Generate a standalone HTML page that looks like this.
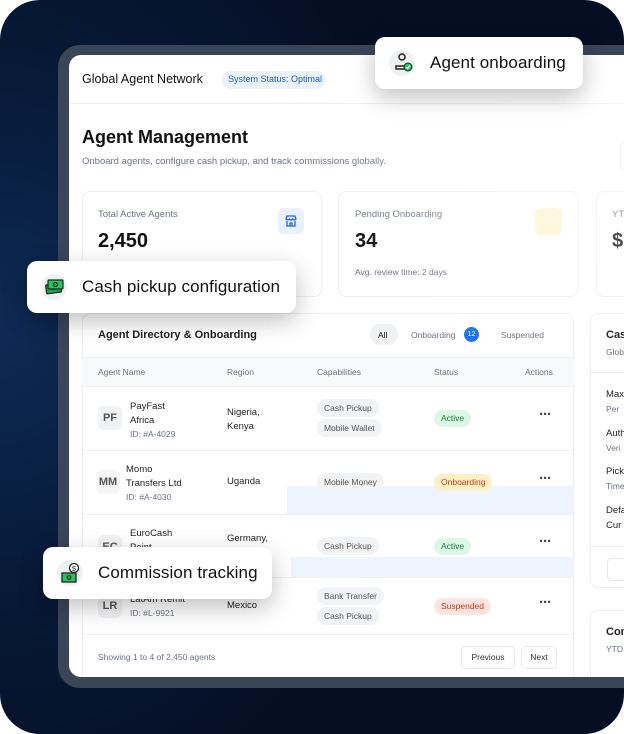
<!DOCTYPE html>
<html><head><meta charset="utf-8"><style>
*{margin:0;padding:0;box-sizing:border-box}
body{width:624px;height:734px;background:#fff;font-family:"Liberation Sans",sans-serif;position:relative;overflow:hidden}
.bg{position:absolute;left:0;top:0;width:624px;height:734px;border-radius:40px;background:radial-gradient(ellipse 420px 500px at 0px 330px,#0e2a55 0%,#071a38 50%,#050f24 100%)}
.frame{position:absolute;left:58px;top:45px;width:600px;height:643px;border-radius:22px;background:#3a4658}
.screen{position:absolute;left:69px;top:55px;width:600px;height:622px;border-radius:12px;background:#fff;overflow:hidden}
.abs{position:absolute}
.t{position:absolute;white-space:nowrap}
.card{position:absolute;border:1px solid #eceef1;border-radius:8px;background:#fff}
.pop{position:absolute;background:#fff;border-radius:10px;box-shadow:0 8px 24px rgba(0,0,0,.25);}
.pop .ic{position:absolute;left:14px;top:13px;width:26px;height:26px;border-radius:50%;background:#eef0f2}
.pop .lbl{position:absolute;top:0;line-height:52px;font-size:17px;color:#111;font-weight:500;letter-spacing:.1px}
.chip{position:absolute;height:18px;line-height:18px;padding:0 7px;background:#f2f3f5;border-radius:9px;font-size:8.5px;color:#555}
.st{position:absolute;height:17px;line-height:17px;padding:0 7px;border-radius:9px;font-size:8.5px}
.g{color:#6b7280}
.dots{position:absolute;font-size:15px;color:#444;letter-spacing:-1px;font-weight:bold;line-height:10px}
.av{position:absolute;width:24px;height:24px;border-radius:6px;background:#f1f2f4;color:#555;font-size:11px;font-weight:bold;text-align:center;line-height:24px}
</style></head><body>
<div class="bg"></div>
<div class="frame"></div>
<div class="screen">
 <div class="t" style="left:13px;top:17px;font-size:12.5px;font-weight:500;color:#111">Global Agent Network</div>
 <div class="abs" style="left:153px;top:16px;width:103px;height:18px;border-radius:9px;background:#eaf2fd"></div>
 <div class="t" style="left:159px;top:19px;font-size:9px;color:#1d5fc2">System Status: Optimal</div>
 <div class="abs" style="left:0;top:48px;width:600px;height:1px;background:#eee"></div>
 <div class="t" style="left:13px;top:72px;font-size:18px;font-weight:bold;color:#111">Agent Management</div>
 <div class="t" style="left:13px;top:101px;font-size:9.5px;color:#6b7280">Onboard agents, configure cash pickup, and track commissions globally.</div>
 <div class="abs" style="left:551px;top:86px;width:20px;height:30px;border:1px solid #e5e7eb;border-radius:6px"></div>
 <div class="card" style="left:13px;top:136px;width:240px;height:106px"></div>
 <div class="t" style="left:29px;top:154px;font-size:9.5px;color:#6b7280">Total Active Agents</div>
 <div class="t" style="left:29px;top:175px;font-size:20px;font-weight:bold;color:#111">2,450</div>
 <div class="abs" style="left:209px;top:153px;width:26px;height:26px;border-radius:6px;background:#e8f1fd"></div>
 <svg class="abs" style="left:215px;top:159px" width="14" height="14" viewBox="0 0 14 14" fill="none" stroke="#2563eb" stroke-width="1.3"><path d="M2 5L3 2h8l1 3v0a2 2 0 0 1-3.3 0a2 2 0 0 1-3.4 0A2 2 0 0 1 2 5z"/><path d="M3 7v5h8V7M6 12V9h2v3"/></svg>
 <div class="card" style="left:269px;top:136px;width:241px;height:106px"></div>
 <div class="t" style="left:286px;top:154px;font-size:9.5px;color:#6b7280">Pending Onboarding</div>
 <div class="t" style="left:286px;top:175px;font-size:20px;font-weight:bold;color:#111">34</div>
 <div class="t" style="left:286px;top:212px;font-size:8.5px;color:#6b7280">Avg. review time: 2 days</div>
 <div class="abs" style="left:466px;top:153px;width:27px;height:27px;border-radius:6px;background:#fdf3cf"></div>
 <div class="card" style="left:527px;top:136px;width:100px;height:106px"></div>
 <div class="t" style="left:543px;top:154px;font-size:9.5px;color:#6b7280">YTD</div>
 <div class="t" style="left:543px;top:175px;font-size:20px;font-weight:bold;color:#111">$</div>

 <div class="card" style="left:13px;top:258px;width:492px;height:400px"></div>
 <div class="t" style="left:29px;top:274px;font-size:11px;font-weight:bold;color:#222">Agent Directory &amp; Onboarding</div>
 <div class="abs" style="left:301px;top:269px;width:28px;height:21px;border-radius:10px;background:#f1f2f4"></div>
 <div class="t" style="left:309px;top:275px;font-size:8.5px;color:#111;font-weight:500">All</div>
 <div class="t" style="left:342px;top:275px;font-size:8.5px;color:#6b7280">Onboarding</div>
 <div class="abs" style="left:395px;top:272px;width:15px;height:15px;border-radius:50%;background:#1f73f0;color:#fff;font-size:7px;text-align:center;line-height:15px">12</div>
 <div class="t" style="left:432px;top:275px;font-size:8.5px;color:#6b7280">Suspended</div>
 <div class="abs" style="left:13px;top:302px;width:492px;height:30px;background:#f8f9fa;border-top:1px solid #eee;border-bottom:1px solid #eee"></div>
 <div class="t g" style="left:29px;top:312px;font-size:8.5px">Agent Name</div>
 <div class="t g" style="left:158px;top:312px;font-size:8.5px">Region</div>
 <div class="t g" style="left:248px;top:312px;font-size:8.5px">Capabilities</div>
 <div class="t g" style="left:365px;top:312px;font-size:8.5px">Status</div>
 <div class="t g" style="left:456px;top:312px;font-size:8.5px">Actions</div>

 <div class="abs" style="left:13px;top:395px;width:492px;height:1px;background:#eee"></div>
 <div class="abs" style="left:13px;top:459px;width:492px;height:1px;background:#eee"></div>
 <div class="abs" style="left:13px;top:522px;width:492px;height:1px;background:#eee"></div>
 <div class="abs" style="left:13px;top:579px;width:492px;height:1px;background:#eee"></div>
 <div class="abs" style="left:218px;top:431px;width:287px;height:28px;background:#eef4fd"></div>
 <div class="abs" style="left:222px;top:502px;width:283px;height:20px;background:#eef4fd"></div>

 <div class="av" style="left:29px;top:351px">PF</div>
 <div class="t" style="left:61px;top:345px;font-size:9.5px;color:#222;line-height:14px">PayFast<br>Africa</div>
 <div class="t g" style="left:61px;top:374px;font-size:8.5px">ID: #A-4029</div>
 <div class="t" style="left:158px;top:351px;font-size:9.5px;color:#222;line-height:14px">Nigeria,<br>Kenya</div>
 <div class="chip" style="left:248px;top:344px">Cash Pickup</div>
 <div class="chip" style="left:248px;top:364px">Mobile Wallet</div>
 <div class="st" style="left:365px;top:355px;background:#dcf7e6;color:#15803d">Active</div>
 <div class="dots" style="left:470px;top:355px">···</div>

 <div class="av" style="left:27px;top:415px;background:#f6f6f7">MM</div>
 <div class="t" style="left:57px;top:408px;font-size:9.5px;color:#222;line-height:14px">Momo<br>Transfers Ltd</div>
 <div class="t g" style="left:57px;top:437px;font-size:8.5px">ID: #A-4030</div>
 <div class="t" style="left:158px;top:421px;font-size:9.5px;color:#222">Uganda</div>
 <div class="chip" style="left:248px;top:418px">Mobile Money</div>
 <div class="st" style="left:365px;top:419px;background:#fdf0c7;color:#c2410c">Onboarding</div>
 <div class="dots" style="left:470px;top:419px">···</div>

 <div class="av" style="left:29px;top:480px">EC</div>
 <div class="t" style="left:61px;top:472px;font-size:9.5px;color:#222;line-height:14px">EuroCash<br>Point</div>
 <div class="t" style="left:158px;top:478px;font-size:9.5px;color:#222">Germany,</div>
 <div class="chip" style="left:248px;top:482px">Cash Pickup</div>
 <div class="st" style="left:365px;top:483px;background:#dcf7e6;color:#15803d">Active</div>
 <div class="dots" style="left:470px;top:482px">···</div>

 <div class="av" style="left:29px;top:539px">LR</div>
 <div class="t" style="left:61px;top:539px;font-size:9.5px;color:#222">LatAm Remit</div>
 <div class="t g" style="left:61px;top:553px;font-size:8.5px">ID: #L-9921</div>
 <div class="t" style="left:158px;top:545px;font-size:9.5px;color:#222">Mexico</div>
 <div class="chip" style="left:248px;top:532px">Bank Transfer</div>
 <div class="chip" style="left:248px;top:552px">Cash Pickup</div>
 <div class="st" style="left:365px;top:543px;background:#fde4e1;color:#c2410c">Suspended</div>
 <div class="dots" style="left:470px;top:543px">···</div>

 <div class="t g" style="left:29px;top:597px;font-size:8.5px">Showing 1 to 4 of 2,450 agents</div>
 <div class="abs" style="left:392px;top:591px;width:54px;height:23px;border:1px solid #e5e7eb;border-radius:5px;font-size:8.5px;color:#333;text-align:center;line-height:21px">Previous</div>
 <div class="abs" style="left:452px;top:591px;width:36px;height:23px;border:1px solid #e5e7eb;border-radius:5px;font-size:8.5px;color:#333;text-align:center;line-height:21px">Next</div>

 <div class="card" style="left:521px;top:258px;width:100px;height:275px"></div>
 <div class="abs" style="left:521px;top:317px;width:100px;height:1px;background:#eee"></div>
 <div class="abs" style="left:521px;top:491px;width:100px;height:1px;background:#eee"></div>
 <div class="t" style="left:537px;top:274px;font-size:11px;font-weight:bold;color:#222">Cas</div>
 <div class="t g" style="left:537px;top:292px;font-size:8.5px">Glob</div>
 <div class="t" style="left:537px;top:334px;font-size:9.5px;color:#222">Max</div>
 <div class="t g" style="left:537px;top:349px;font-size:8.5px">Per</div>
 <div class="t" style="left:537px;top:373px;font-size:9.5px;color:#222">Auth</div>
 <div class="t g" style="left:537px;top:388px;font-size:8.5px">Veri</div>
 <div class="t" style="left:537px;top:411px;font-size:9.5px;color:#222">Pick</div>
 <div class="t g" style="left:537px;top:426px;font-size:8.5px">Time</div>
 <div class="t" style="left:537px;top:450px;font-size:9.5px;color:#222">Defa</div>
 <div class="t" style="left:537px;top:465px;font-size:9.5px;color:#222">Cur</div>
 <div class="abs" style="left:538px;top:503px;width:60px;height:23px;border:1px solid #e5e7eb;border-radius:5px"></div>
 <div class="card" style="left:521px;top:555px;width:100px;height:120px"></div>
 <div class="t" style="left:537px;top:571px;font-size:11px;font-weight:bold;color:#222">Com</div>
 <div class="t g" style="left:537px;top:589px;font-size:8.5px">YTD</div>
 <div class="abs" style="left:250px;top:0;width:350px;height:300px;background:radial-gradient(ellipse at 70% 30%,rgba(255,255,255,.5),rgba(255,255,255,0) 70%)"></div>
</div>

<div class="pop" style="left:375px;top:37px;width:208px;height:52px">
 <div class="ic"></div>
 <svg class="abs" style="left:17px;top:15px" width="22" height="22" viewBox="0 0 22 22"><circle cx="10" cy="5" r="3" fill="none" stroke="#222" stroke-width="1.5"/><path d="M4 17v-3h10v3z" fill="none" stroke="#222" stroke-width="1.5"/><circle cx="16" cy="15" r="4" fill="#22c55e" stroke="#222" stroke-width="1"/><path d="M14 15l1.5 1.5 2.5-3" stroke="#fff" fill="none" stroke-width="1.2"/></svg>
 <div class="lbl" style="left:55px">Agent onboarding</div>
</div>
<div class="pop" style="left:27px;top:261px;width:269px;height:52px">
 <div class="ic"></div>
 <svg class="abs" style="left:17px;top:16px" width="22" height="20" viewBox="0 0 22 20"><rect x="2" y="7" width="15" height="9" rx="1" transform="rotate(-8 9 11)" fill="#16a34a" stroke="#222" stroke-width="1.2"/><rect x="4" y="3" width="15" height="9" rx="1" fill="#22c55e" stroke="#222" stroke-width="1.2"/><circle cx="11.5" cy="7.5" r="2" fill="none" stroke="#222" stroke-width="1.2"/></svg>
 <div class="lbl" style="left:55px">Cash pickup configuration</div>
</div>
<div class="pop" style="left:43px;top:547px;width:229px;height:52px">
 <div class="ic"></div>
 <svg class="abs" style="left:16px;top:14px" width="24" height="24" viewBox="0 0 24 24"><circle cx="15" cy="7" r="4.5" fill="#fff" stroke="#222" stroke-width="1.3"/><text x="13" y="10" font-size="7" font-family="Liberation Sans" fill="#222">$</text><rect x="3" y="12" width="14" height="9" fill="#22c55e" stroke="#222" stroke-width="1.3"/><circle cx="10" cy="16.5" r="1.8" fill="none" stroke="#222" stroke-width="1.2"/></svg>
 <div class="lbl" style="left:55px">Commission tracking</div>
</div>
</body></html>
